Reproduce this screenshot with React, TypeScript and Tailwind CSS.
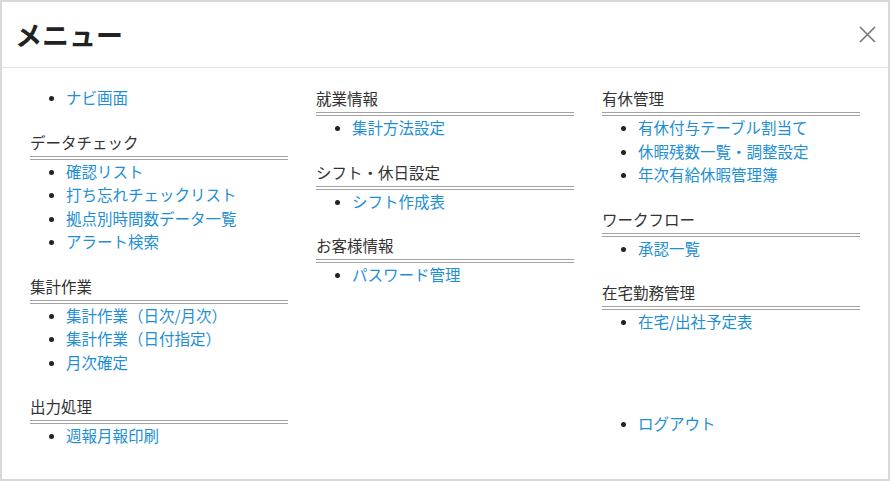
const columns = [
  [
    { title: '', items: ['ナビ画面'] },
    { title: 'データチェック', items: ['確認リスト', '打ち忘れチェックリスト', '拠点別時間数データ一覧', 'アラート検索'] },
    { title: '集計作業', items: ['集計作業（日次/月次）', '集計作業（日付指定）', '月次確定'] },
    { title: '出力処理', items: ['週報月報印刷'] },
  ],
  [
    { title: '就業情報', items: ['集計方法設定'] },
    { title: 'シフト・休日設定', items: ['シフト作成表'] },
    { title: 'お客様情報', items: ['パスワード管理'] },
  ],
  [
    { title: '有休管理', items: ['有休付与テーブル割当て', '休暇残数一覧・調整設定', '年次有給休暇管理簿'] },
    { title: 'ワークフロー', items: ['承認一覧'] },
    { title: '在宅勤務管理', items: ['在宅/出社予定表'] },
  ],
];

function LinkList({ items }: { items: string[] }) {
  return (
    <ul className="list-disc pl-9 marker:text-[#222] marker:text-[13px]">
      {items.map((item) => (
        <li key={item} className="leading-[23.5px]">
          <a href="#" className="text-[#1e8fd4]">
            {item}
          </a>
        </li>
      ))}
    </ul>
  );
}

export default function App() {
  return (
    <div
      className="w-[890px] h-[481px] border-2 border-[#d9d9d9] bg-white text-[15.5px] overflow-hidden"
      style={{ fontFamily: '"Noto Sans CJK JP", "Noto Sans", sans-serif' }}
    >
      {/* Header */}
      <div className="h-[66px] flex items-center justify-between pl-[13px] pr-[12px] border-b border-[#e3e3e3]">
        <h1 className="text-[27px] font-bold text-[#222] leading-none">メニュー</h1>
        <button className="w-[18px] h-[18px] flex items-center justify-center">
          <svg width="17" height="17" viewBox="0 0 17 17" fill="none" stroke="#777" strokeWidth="1.6">
            <path d="M1 1L16 16M16 1L1 16" />
          </svg>
        </button>
      </div>

      {/* Body */}
      <div className="grid grid-cols-[258px_258px_258px] gap-x-[28px] pl-[28px] pt-[18px]">
        {columns.map((sections, ci) => (
          <div key={ci}>
            {sections.map((section, si) => (
              <div key={si} className="mb-5">
                {section.title && (
                  <h2 className="leading-[24px] pb-[2px] text-[#333] border-b-[4px] border-double border-[#a3a3a3]">
                    {section.title}
                  </h2>
                )}
                <LinkList items={section.items} />
              </div>
            ))}
            {ci === 2 && (
              <div className="mt-[78px]">
                <LinkList items={['ログアウト']} />
              </div>
            )}
          </div>
        ))}
      </div>
    </div>
  );
}
